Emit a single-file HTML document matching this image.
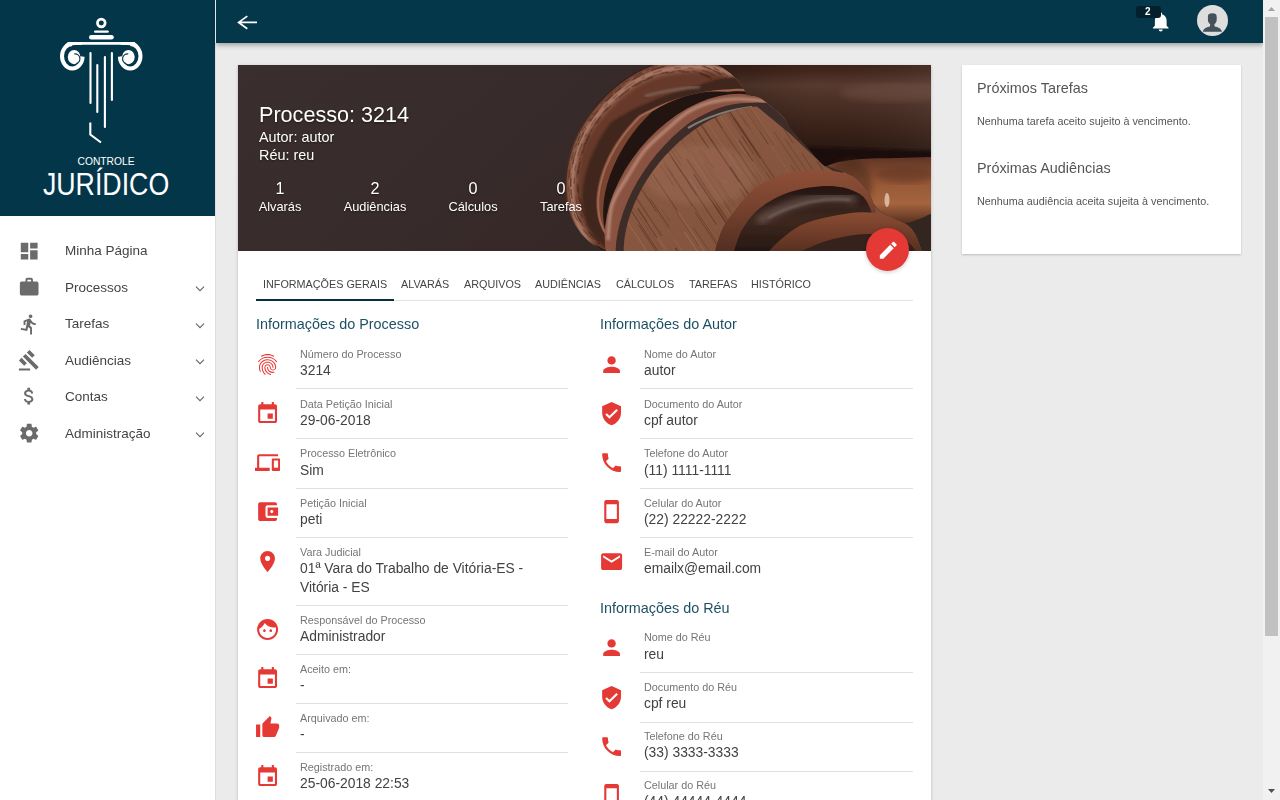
<!DOCTYPE html>
<html><head><meta charset="utf-8">
<style>
*{box-sizing:border-box;margin:0;padding:0}
html,body{width:1280px;height:800px;overflow:hidden}
body{font-family:"Liberation Sans",sans-serif;background:#ebebeb;position:relative;color:#333}
.abs{position:absolute}
.t{position:absolute;white-space:nowrap;line-height:1;will-change:transform}
#side{left:0;top:0;width:216px;height:800px;background:#fff;border-right:1px solid #dedede}
#sidetop{left:0;top:0;width:215px;height:216px;background:#04364a}
#hdr{left:216px;top:0;width:1047px;height:43px;background:#04374a;box-shadow:0 2px 5px rgba(0,0,0,.34)}
#vline{left:215px;top:0;width:1px;height:43px;background:#e6e6e6}
#card{left:238px;top:65px;width:693px;height:800px;background:#fff;box-shadow:0 1px 3px rgba(0,0,0,.22)}
#rpanel{left:962px;top:65px;width:279px;height:189px;background:#fff;box-shadow:0 1px 2px rgba(0,0,0,.2)}
#sb{left:1263px;top:0;width:17px;height:800px;background:#f1f1f1}
#thumb{left:1265px;top:17px;width:13px;height:619px;background:#c1c1c1}
.fab{left:866px;top:228px;width:43px;height:43px;border-radius:50%;background:#e53935;box-shadow:0 1px 4px rgba(0,0,0,.22)}
</style></head><body>
<div id="side" class="abs"></div>
<div id="sidetop" class="abs"></div>
<div id="hdr" class="abs"></div>
<div id="vline" class="abs"></div>

<svg class="abs" style="left:0;top:0" width="215" height="216" viewBox="0 0 215 216">
<g id="vol">
<path d="M72.3,43.9 A10.3,12.3 0 1 0 82.6,56.6" fill="none" stroke="#fff" stroke-width="4"/><path d="M68,42.05 L82,42.05 L82,44.75 L64,45.5 Z" fill="#fff"/>
<ellipse cx="74.1" cy="57.1" rx="6.3" ry="7.1" fill="#fff"/>
<path d="M80.5,56.5 L82.6,56.8 L80.5,62 Z" fill="#fff"/>
<path d="M74.2,54 A3.6,3.8 0 1 1 76.3,63.6" fill="none" stroke="#04364a" stroke-width="1.1"/>
</g>
<g fill="none" stroke="#fff" stroke-linecap="round">
<circle cx="101.3" cy="23" r="3.85" stroke-width="2.7"/>
<line x1="95.2" y1="31.6" x2="107.6" y2="31.6" stroke-width="2.4"/>
<line x1="91.3" y1="37.3" x2="111.5" y2="37.3" stroke-width="4.6"/>
<line x1="90.5" y1="53" x2="90.5" y2="103" stroke-width="2.1"/>
<line x1="97.3" y1="65" x2="97.3" y2="112" stroke-width="2.1"/>
<line x1="104.9" y1="57" x2="104.9" y2="127" stroke-width="2.1"/>
<line x1="111.9" y1="53" x2="111.9" y2="100" stroke-width="2.1"/>
<path d="M90.3 122.5 V134.5 L101 142.5" stroke-width="2.1" stroke-linecap="butt"/>
</g>
<rect x="72" y="42.05" width="58.5" height="2.7" fill="#fff"/>
<use href="#vol" transform="translate(202.5,0) scale(-1,1)"/>
<text x="77.5" y="165.2" font-family="Liberation Sans" font-size="10.9" fill="#fff" textLength="57" lengthAdjust="spacingAndGlyphs">CONTROLE</text>
<text x="42.9" y="194.8" font-family="Liberation Sans" font-size="31.2" fill="#fff" textLength="126.3" lengthAdjust="spacingAndGlyphs">JURÍDICO</text>
</svg>

<svg class="abs" style="left:17.6px;top:239.60000000000002px;width:22.4px;height:22.4px" viewBox="0 0 24 24"><path fill="#6b6b6b" d="M3 13h8V3H3v10zm0 8h8v-6H3v6zm10 0h8V11h-8v10zm0-18v6h8V3h-8z"/></svg>
<div class="t" style="left:65px;top:244.37px;font-size:13.5px;color:#444">Minha Página</div>
<svg class="abs" style="left:17.6px;top:276.05px;width:22.4px;height:22.4px" viewBox="0 0 24 24"><path fill="#6b6b6b" d="M20 6h-4V4c0-1.11-.89-2-2-2h-4c-1.11 0-2 .89-2 2v2H4c-1.11 0-1.99.89-1.99 2L2 19c0 1.11.89 2 2 2h16c1.11 0 2-.89 2-2V8c0-1.11-.89-2-2-2zm-6 0h-4V4h4v2z"/></svg>
<div class="t" style="left:65px;top:280.82px;font-size:13.5px;color:#444">Processos</div>
<svg class="abs" style="left:194px;top:285.25px" width="12" height="8" viewBox="0 0 12 8"><path d="M2,1.6 L6,5.7 L10,1.6" fill="none" stroke="#666" stroke-width="1.1"/></svg>
<svg class="abs" style="left:17.6px;top:312.50000000000006px;width:22.4px;height:22.4px" viewBox="0 0 24 24"><path fill="#6b6b6b" d="M13.49 5.48c1.1 0 2-.9 2-2s-.9-2-2-2-2 .9-2 2 .9 2 2 2zm-3.6 13.9l1-4.4 2.1 2v6h2v-7.5l-2.1-2 .6-3c1.3 1.5 3.3 2.5 5.5 2.5v-2c-1.9 0-3.5-1-4.3-2.4l-1-1.6c-.4-.6-1-1-1.7-1-.3 0-.5.1-.8.1l-5.2 2.2v4.7h2v-3.4l1.8-.7-1.6 8.1-4.9-1-.4 2 7 1.4z"/></svg>
<div class="t" style="left:65px;top:317.27px;font-size:13.5px;color:#444">Tarefas</div>
<svg class="abs" style="left:194px;top:321.70px" width="12" height="8" viewBox="0 0 12 8"><path d="M2,1.6 L6,5.7 L10,1.6" fill="none" stroke="#666" stroke-width="1.1"/></svg>
<svg class="abs" style="left:17.6px;top:348.95000000000005px;width:22.4px;height:22.4px" viewBox="0 0 24 24"><path fill="#6b6b6b" d="M1 21h12v2H1zM5.245 8.07l2.83-2.827 14.14 14.142-2.828 2.828zM12.317 1l5.657 5.656-2.83 2.83-5.654-5.66zM3.825 9.485l5.657 5.657-2.828 2.828-5.657-5.657z"/></svg>
<div class="t" style="left:65px;top:353.72px;font-size:13.5px;color:#444">Audiências</div>
<svg class="abs" style="left:194px;top:358.15px" width="12" height="8" viewBox="0 0 12 8"><path d="M2,1.6 L6,5.7 L10,1.6" fill="none" stroke="#666" stroke-width="1.1"/></svg>
<svg class="abs" style="left:17.6px;top:385.40000000000003px;width:22.4px;height:22.4px" viewBox="0 0 24 24"><path fill="#6b6b6b" d="M11.8 10.9c-2.27-.59-3-1.2-3-2.15 0-1.09 1.01-1.85 2.7-1.85 1.78 0 2.44.85 2.5 2.1h2.21c-.07-1.72-1.120-3.3-3.21-3.81V3h-3v2.16c-1.94.42-3.5 1.68-3.5 3.61 0 2.31 1.91 3.46 4.7 4.13 2.5.6 3 1.48 3 2.41 0 .69-.49 1.79-2.7 1.79-2.06 0-2.87-.92-2.98-2.1h-2.2c.12 2.19 1.76 3.42 3.68 3.830V21h3v-2.15c1.95-.37 3.5-1.5 3.5-3.55 0-2.84-2.43-3.81-4.7-4.4z"/></svg>
<div class="t" style="left:65px;top:390.17px;font-size:13.5px;color:#444">Contas</div>
<svg class="abs" style="left:194px;top:394.60px" width="12" height="8" viewBox="0 0 12 8"><path d="M2,1.6 L6,5.7 L10,1.6" fill="none" stroke="#666" stroke-width="1.1"/></svg>
<svg class="abs" style="left:17.6px;top:421.85px;width:22.4px;height:22.4px" viewBox="0 0 24 24"><path fill="#6b6b6b" d="M19.43 12.98c.04-.32.07-.64.07-.98s-.03-.66-.07-.98l2.11-1.65c.19-.15.24-.42.12-.64l-2-3.46c-.12-.22-.39-.3-.61-.22l-2.49 1c-.52-.4-1.08-.73-1.69-.98l-.38-2.65C14.46 2.18 14.25 2 14 2h-4c-.25 0-.46.18-.49.42l-.38 2.650c-.61.25-1.170.59-1.69.98l-2.49-1c-.23-.09-.49 0-.61.22l-2 3.46c-.13.22-.07.49.12.64l2.11 1.65c-.04.32-.07.65-.07.98s.03.66.07.98l-2.11 1.65c-.19.15-.24.42-.12.64l2 3.46c.12.22.39.3.61.22l2.49-1c.52.4 1.08.73 1.69.98l.38 2.65c.03.24.24.42.49.42h4c.25 0 .46-.18.49-.42l.38-2.65c.61-.25 1.17-.59 1.69-.98l2.49 1c.23.09.49 0 .61-.22l2-3.46c.12-.22.07-.49-.12-.64l-2.11-1.65zM12 15.5c-1.93 0-3.5-1.57-3.5-3.5s1.57-3.5 3.5-3.5 3.5 1.57 3.5 3.5-1.57 3.5-3.5 3.5z"/></svg>
<div class="t" style="left:65px;top:426.62px;font-size:13.5px;color:#444">Administração</div>
<svg class="abs" style="left:194px;top:431.05px" width="12" height="8" viewBox="0 0 12 8"><path d="M2,1.6 L6,5.7 L10,1.6" fill="none" stroke="#666" stroke-width="1.1"/></svg>
<svg class="abs" style="left:236px;top:14px" width="24" height="18" viewBox="0 0 24 18"><path d="M2.6 8.4 H21 M11.3 2.1 L2.6 8.4 L11.3 14.7" fill="none" stroke="#fff" stroke-width="1.7"/></svg>
<svg class="abs" style="left:1148.6px;top:9.8px;width:23.5px;height:23.5px" viewBox="0 0 24 24"><path fill="#fff" d="M12 22c1.1 0 2-.9 2-2h-4c0 1.1.89 2 2 2zm6-6v-5c0-3.07-1.64-5.64-4.5-6.32V4c0-.83-.67-1.5-1.5-1.5s-1.5.67-1.5 1.5v.68C7.63 5.36 6 7.92 6 11v5l-2 2v1h16v-1l-2-2z"/></svg>
<div class="abs" style="left:1136px;top:6px;width:25px;height:12px;border-radius:3px;background:#03202c"></div>
<div class="t" style="left:1145.2px;top:6.73px;font-size:10px;color:#fff;font-weight:bold">2</div>
<div class="abs" style="left:1197px;top:5px;width:31px;height:31px;border-radius:50%;background:#dedede;overflow:hidden"><svg width="31" height="31" viewBox="0 0 31 31"><path fill="#45525a" d="M10.9,11.8 C10.9,9.2 12.3,8.3 15.3,8.3 C18.3,8.3 19.7,9.2 19.7,11.8 L19.7,14.8 C19.7,17.6 17.7,19.8 15.3,19.8 C12.9,19.8 10.9,17.6 10.9,14.8 Z M13.2,18 L17.4,18 L17.6,21.6 C20.8,21.9 24.3,23.5 24.9,26.8 L5.9,26.8 C6.5,23.5 10,21.9 13,21.6 Z"/></svg></div>
<div id="sb" class="abs"></div><div id="thumb" class="abs"></div>
<svg class="abs" style="left:1263px;top:0" width="17" height="17"><path d="M5 11 L8.5 7 L12 11 Z" fill="#a3a3a3"/></svg>
<svg class="abs" style="left:1263px;top:783px" width="17" height="17"><path d="M5 6 L8.5 10 L12 6 Z" fill="#505050"/></svg>
<div id="card" class="abs"></div>
<svg class="abs" style="left:238px;top:65px" width="693" height="186" viewBox="238 65 693 186">
<defs>
<linearGradient id="bg" x1="0" y1="0" x2="1" y2="0.3">
<stop offset="0" stop-color="#3b2e2e"/><stop offset="0.5" stop-color="#372a2a"/><stop offset="1" stop-color="#33251f"/></linearGradient>
<linearGradient id="snd" x1="0" y1="0" x2="0" y2="1">
<stop offset="0" stop-color="#3a2019"/><stop offset="0.12" stop-color="#43271d"/><stop offset="0.26" stop-color="#583a2e"/><stop offset="0.38" stop-color="#4e3228"/><stop offset="0.7" stop-color="#3a2219"/><stop offset="0.92" stop-color="#2a1811"/><stop offset="1" stop-color="#1b0f0a"/></linearGradient>
<linearGradient id="sndh" x1="0" y1="0" x2="1" y2="0">
<stop offset="0" stop-color="#000" stop-opacity="0.3"/><stop offset="0.5" stop-color="#000" stop-opacity="0"/><stop offset="1" stop-color="#fff" stop-opacity="0.05"/></linearGradient>
<linearGradient id="hdl" x1="0" y1="0" x2="0" y2="1">
<stop offset="0" stop-color="#5e3424"/><stop offset="0.35" stop-color="#955736"/><stop offset="0.7" stop-color="#a4643f"/><stop offset="1" stop-color="#56301e"/></linearGradient>
<linearGradient id="body" x1="0" y1="0" x2="1" y2="1">
<stop offset="0" stop-color="#744532"/><stop offset="0.3" stop-color="#8c5a43"/><stop offset="0.65" stop-color="#80513b"/><stop offset="1" stop-color="#603826"/></linearGradient>
<linearGradient id="rC" x1="0" y1="0" x2="0" y2="1">
<stop offset="0" stop-color="#8e4f37"/><stop offset="0.35" stop-color="#7a4430"/><stop offset="1" stop-color="#4a2a1e"/></linearGradient>
<linearGradient id="rCd" x1="0" y1="0" x2="0" y2="1">
<stop offset="0" stop-color="#251510"/><stop offset="0.45" stop-color="#3e2820"/><stop offset="1" stop-color="#1e110c"/></linearGradient>
<linearGradient id="rD" x1="0" y1="0" x2="0" y2="1">
<stop offset="0" stop-color="#8c4c34"/><stop offset="1" stop-color="#4a281b"/></linearGradient>
<clipPath id="gclip"><path d="M630.6,257.2 L620.8,256.1 L611.4,253.9 L602.7,250.4 L594.6,245.8 L587.4,240.1 L581.1,233.4 L575.7,225.8 L571.4,217.3 L568.1,208.1 L566.0,198.3 L565.1,187.9 L565.3,177.2 L566.7,166.3 L569.2,155.2 L572.9,144.2 L577.6,133.4 L583.3,122.8 L590.0,112.7 L597.6,103.1 L605.9,94.2 L614.8,86.1 L624.4,78.9 L634.3,72.6 L644.6,67.4 L655.1,63.3 L665.7,60.4 L676.1,58.6 L686.4,58.1 L696.3,58.8 L705.8,60.7 L714.8,63.8 L723.0,68.1 L730.5,73.5 L737.1,79.9 L742.8,87.2 L747.4,95.5 L748.0,94.7 C748.7,94.9 750.0,95.5 752.0,96.0 C754.0,96.5 754.9,94.4 760.0,97.8 C765.1,101.2 777.3,111.0 782.6,116.5 C787.9,122.0 787.8,125.6 792.0,131.0 C796.2,136.4 802.8,143.3 808.0,149.0 C813.2,154.7 819.3,162.0 823.0,165.0 C826.7,168.0 825.0,165.1 830.0,167.0 C835.0,168.9 846.8,172.7 853.0,176.6 C859.2,180.5 863.3,185.7 867.0,190.6 C870.7,195.5 871.7,201.8 875.0,206.0 C878.3,210.2 881.0,211.9 887.0,215.6 C893.0,219.3 904.9,222.1 910.7,228.0 C916.5,233.9 919.4,245.3 921.6,251.0 C923.8,256.7 923.6,260.2 924.0,262.0 L600,262 Z"/></clipPath>
<clipPath id="bclip"><path d="M668.7,312.8 L662.2,311.2 L656.0,308.8 L650.3,305.9 L645.0,302.2 L640.3,298.0 L636.1,293.1 L632.5,287.7 L629.4,281.8 L627.0,275.3 L625.2,268.5 L624.1,261.2 L623.6,253.6 L623.8,245.7 L624.6,237.5 L626.1,229.2 L628.2,220.7 L631.0,212.2 L634.3,203.7 L638.3,195.2 L642.7,186.8 L647.8,178.5 L653.3,170.5 L659.2,162.7 L665.6,155.3 L672.4,148.2 L679.4,141.6 L686.8,135.4 L694.4,129.8 L702.1,124.6 L710.0,120.1 L718.0,116.2 L725.9,112.9 L733.8,110.3 L741.7,108.3 L749.4,107.0 L756.9,106.5 L790.0,133.8 L823.0,165.0 L840.0,175.0 L1000,40 L1000,262 L560,262 Z"/></clipPath>
<filter id="blur05"><feGaussianBlur stdDeviation="0.6"/></filter>
<filter id="blur1"><feGaussianBlur stdDeviation="1.2"/></filter>
<filter id="blur2"><feGaussianBlur stdDeviation="2"/></filter>
<filter id="blur3"><feGaussianBlur stdDeviation="3"/></filter>
</defs>
<rect x="238" y="65" width="693" height="186" fill="url(#bg)"/>
<path d="M690,60 L935,60 L935,157 C900,157 860,153 830,150 C800,147 770,130 740,110 Z" fill="url(#snd)"/>
<path d="M690,60 L935,60 L935,157 C900,157 860,153 830,150 C800,147 770,130 740,110 Z" fill="url(#sndh)"/>
<ellipse cx="895" cy="93" rx="55" ry="9" fill="#7a5648" opacity="0.4" filter="url(#blur3)"/>
<path d="M790,146 L935,151 L935,166 L820,176 Z" fill="#1c100b" filter="url(#blur1)"/>
<path d="M815.0,180.0 C817.2,177.6 821.2,169.0 828.0,165.6 C834.8,162.2 844.0,160.7 856.0,159.4 C868.0,158.1 886.8,158.4 900.0,158.0 C913.2,157.6 929.2,157.2 935.0,157.0 L935,212 L935.0,212.0 C929.7,213.9 912.8,223.3 903.0,223.4 C893.2,223.5 884.8,216.4 876.0,212.5 C867.2,208.6 860.2,205.4 850.0,200.0 C839.8,194.6 820.8,183.3 815.0,180.0 Z" fill="url(#hdl)"/>
<ellipse cx="850" cy="185" rx="22" ry="26" fill="#3a2016" opacity="0.45" filter="url(#blur3)"/><ellipse cx="905" cy="175" rx="30" ry="8" fill="#5a3020" opacity="0.5" filter="url(#blur3)"/><ellipse cx="887" cy="200" rx="2.5" ry="7" fill="#f0d8c8" opacity="0.7" filter="url(#blur05)"/>
<g clip-path="url(#gclip)">
<rect x="550" y="50" width="400" height="220" fill="#66392a"/>
<path d="M630.6,257.2 C629.0,257.0 624.0,256.7 620.8,256.1 C617.6,255.6 614.4,254.8 611.4,253.9 C608.4,252.9 605.5,251.7 602.7,250.4 C599.9,249.0 597.2,247.5 594.6,245.8 C592.1,244.1 589.7,242.2 587.4,240.1 C585.2,238.0 583.0,235.8 581.1,233.4 C579.1,231.0 577.3,228.5 575.7,225.8 C574.1,223.1 572.6,220.2 571.4,217.3 C570.1,214.3 569.0,211.3 568.1,208.1 C567.3,204.9 566.5,201.6 566.0,198.3 C565.5,194.9 565.2,191.4 565.1,187.9 C565.0,184.4 565.0,180.8 565.3,177.2 C565.6,173.6 566.0,170.0 566.7,166.3 C567.3,162.6 568.2,158.9 569.2,155.2 C570.2,151.6 571.5,147.9 572.9,144.2 C574.3,140.6 575.8,136.9 577.6,133.4 C579.3,129.8 581.3,126.3 583.3,122.8 C585.4,119.4 587.6,116.0 590.0,112.7 C592.4,109.4 594.9,106.2 597.6,103.1 C600.2,100.1 603.0,97.1 605.9,94.2 C608.7,91.4 611.8,88.7 614.8,86.1 C617.9,83.6 621.1,81.1 624.4,78.9 C627.6,76.6 631.0,74.5 634.3,72.6 C637.7,70.7 641.2,69.0 644.6,67.4 C648.1,65.9 651.6,64.5 655.1,63.3 C658.6,62.1 662.1,61.1 665.7,60.4 C669.2,59.6 672.7,59.0 676.1,58.6 C679.6,58.2 683.0,58.1 686.4,58.1 C689.8,58.1 693.1,58.4 696.3,58.8 C699.6,59.2 702.8,59.9 705.8,60.7 C708.9,61.5 711.9,62.6 714.8,63.8 C717.6,65.1 720.4,66.5 723.0,68.1 C725.6,69.7 728.1,71.5 730.5,73.5 C732.8,75.4 735.1,77.6 737.1,79.9 C739.2,82.2 741.1,84.6 742.8,87.2 C744.5,89.8 746.6,94.1 747.4,95.5" fill="none" stroke="#2a1a14" stroke-width="3" filter="url(#blur05)"/>
<path d="M592.0,248.0 C589.5,243.7 580.3,230.8 577.0,222.0 C573.7,213.2 572.5,204.5 572.0,195.0 C571.5,185.5 572.5,174.2 574.0,165.0 C575.5,155.8 577.3,148.0 581.0,140.0 C584.7,132.0 590.3,124.2 596.0,117.0 C601.7,109.8 608.0,103.2 615.0,97.0 C622.0,90.8 629.7,84.5 638.0,80.0 C646.3,75.5 654.7,72.2 665.0,70.0 C675.3,67.8 689.5,66.7 700.0,67.0 C710.5,67.3 720.7,68.5 728.0,72.0 C735.3,75.5 741.3,85.3 744.0,88.0" fill="none" stroke="#a06a55" stroke-width="9" stroke-opacity="0.85" filter="url(#blur2)"/>
<path d="M592.0,248.0 C589.5,243.7 580.3,230.8 577.0,222.0 C573.7,213.2 572.5,204.5 572.0,195.0 C571.5,185.5 572.5,174.2 574.0,165.0 C575.5,155.8 577.3,148.0 581.0,140.0 C584.7,132.0 590.3,124.2 596.0,117.0 C601.7,109.8 608.0,103.2 615.0,97.0 C622.0,90.8 629.7,84.5 638.0,80.0 C646.3,75.5 654.7,72.2 665.0,70.0 C675.3,67.8 689.5,66.7 700.0,67.0 C710.5,67.3 720.7,68.5 728.0,72.0 C735.3,75.5 741.3,85.3 744.0,88.0" fill="none" stroke="#c8a090" stroke-width="2.5" stroke-opacity="0.5" filter="url(#blur1)"/>
<g filter="url(#blur05)"><path d="M618.0,249.2 L610.6,246.9 L603.7,243.7 L597.3,239.8 L591.5,235.1 L586.3,229.6 L581.8,223.6 L578.0,216.9 L575.0,209.6 L572.7,201.9 L571.3,193.8 L570.7,185.3 L570.9,176.6 L571.9,167.7 L573.7,158.8 L576.3,149.8 L579.7,140.9 L583.8,132.1 L588.7,123.6 L594.1,115.4 L600.2,107.5 L606.9,100.2 L614.0,93.4 L621.6,87.1 L629.5,81.5 L637.7,76.6 L646.1,72.5 L654.6,69.2 L663.2,66.6 L671.7,64.9 L680.1,64.1 L688.4,64.1 L696.4,65.0 L704.0,66.7 L711.3,69.3 L718.1,72.6 L724.3,76.8 L729.9,81.7 L735.0,87.3 L739.3,93.6 L742.9,100.4" fill="none" stroke="#2a160e" stroke-width="1.3" stroke-opacity="0.41" stroke-dasharray="13 7 14 13 13 12 10 2 9 14"/><path d="M620.9,242.8 L614.1,240.6 L607.7,237.7 L601.7,234.0 L596.3,229.6 L591.5,224.6 L587.3,218.9 L583.8,212.7 L581.0,206.0 L578.9,198.8 L577.5,191.2 L576.9,183.4 L577.1,175.3 L578.1,167.0 L579.8,158.7 L582.2,150.3 L585.3,142.0 L589.2,133.9 L593.7,126.0 L598.8,118.3 L604.4,111.1 L610.6,104.2 L617.2,97.9 L624.3,92.1 L631.6,86.9 L639.2,82.4 L647.0,78.5 L655.0,75.4 L662.9,73.0 L670.9,71.4 L678.7,70.7 L686.4,70.7 L693.8,71.5 L700.9,73.1 L707.7,75.5 L714.0,78.6 L719.8,82.5 L725.0,87.1 L729.7,92.3 L733.7,98.1 L737.0,104.5" fill="none" stroke="#3a2014" stroke-width="1.3" stroke-opacity="0.32" stroke-dasharray="9 5 8 10 3 11 5 2 13 5"/><path d="M617.2,251.0 L609.7,248.7 L602.6,245.4 L596.1,241.4 L590.2,236.6 L584.9,231.1 L580.3,224.9 L576.4,218.0 L573.3,210.6 L571.0,202.8 L569.5,194.5 L568.9,185.9 L569.1,177.0 L570.1,167.9 L572.0,158.8 L574.7,149.6 L578.1,140.5 L582.3,131.6 L587.2,122.9 L592.8,114.5 L599.1,106.6 L605.8,99.1 L613.1,92.1 L620.8,85.7 L628.9,80.0 L637.2,75.1 L645.8,70.8 L654.5,67.4 L663.2,64.8 L671.9,63.1 L680.5,62.2 L688.9,62.2 L697.1,63.1 L704.9,64.9 L712.3,67.5 L719.2,71.0 L725.6,75.2 L731.3,80.2 L736.4,85.9 L740.8,92.3 L744.5,99.3" fill="none" stroke="#2a160e" stroke-width="0.6" stroke-opacity="0.49" stroke-dasharray="4 14 14 3 4 11 11 9 4 4"/><path d="M617.1,251.1 L609.6,248.7 L602.5,245.5 L596.0,241.5 L590.1,236.7 L584.8,231.1 L580.2,224.9 L576.3,218.1 L573.2,210.7 L570.9,202.8 L569.4,194.5 L568.8,185.9 L569.0,177.0 L570.0,167.9 L571.9,158.8 L574.6,149.6 L578.0,140.5 L582.2,131.6 L587.2,122.9 L592.8,114.5 L599.0,106.5 L605.8,99.0 L613.0,92.0 L620.8,85.7 L628.8,79.9 L637.2,75.0 L645.8,70.7 L654.5,67.3 L663.2,64.7 L671.9,63.0 L680.6,62.1 L689.0,62.1 L697.1,63.0 L704.9,64.8 L712.3,67.4 L719.3,70.9 L725.6,75.1 L731.4,80.1 L736.5,85.9 L740.9,92.2 L744.6,99.2" fill="none" stroke="#b08068" stroke-width="1.4" stroke-opacity="0.18" stroke-dasharray="4 4 6 7 5 10 12 12 5 4"/><path d="M619.4,246.2 L612.3,243.9 L605.6,240.9 L599.4,237.1 L593.8,232.5 L588.8,227.3 L584.4,221.4 L580.7,214.9 L577.8,207.9 L575.6,200.4 L574.2,192.6 L573.6,184.4 L573.8,176.0 L574.8,167.4 L576.5,158.7 L579.1,150.0 L582.4,141.4 L586.3,132.9 L591.0,124.7 L596.3,116.8 L602.2,109.2 L608.6,102.1 L615.5,95.5 L622.8,89.5 L630.5,84.1 L638.4,79.3 L646.5,75.3 L654.8,72.1 L663.0,69.6 L671.3,68.0 L679.5,67.2 L687.4,67.2 L695.2,68.0 L702.6,69.7 L709.6,72.2 L716.1,75.5 L722.2,79.5 L727.6,84.2 L732.5,89.7 L736.6,95.7 L740.1,102.3" fill="none" stroke="#b08068" stroke-width="1.1" stroke-opacity="0.15" stroke-dasharray="2 7 8 4 4 6 3 7 6 11"/><path d="M619.6,245.6 L612.6,243.4 L605.9,240.3 L599.8,236.5 L594.2,232.0 L589.2,226.8 L584.9,221.0 L581.2,214.5 L578.3,207.6 L576.2,200.2 L574.8,192.4 L574.2,184.2 L574.4,175.9 L575.3,167.3 L577.1,158.7 L579.6,150.1 L582.9,141.5 L586.8,133.1 L591.5,124.9 L596.7,117.0 L602.6,109.5 L609.0,102.5 L615.8,95.9 L623.1,89.9 L630.7,84.5 L638.5,79.8 L646.6,75.9 L654.8,72.6 L663.0,70.2 L671.2,68.6 L679.3,67.8 L687.3,67.8 L694.9,68.6 L702.3,70.3 L709.3,72.7 L715.8,76.0 L721.8,80.0 L727.2,84.7 L732.0,90.1 L736.1,96.1 L739.6,102.7" fill="none" stroke="#2a160e" stroke-width="1.4" stroke-opacity="0.26" stroke-dasharray="6 7 6 9 13 7 4 9 9 13"/><path d="M621.5,241.6 L614.7,239.5 L608.4,236.6 L602.5,233.0 L597.2,228.6 L592.4,223.7 L588.3,218.1 L584.8,212.0 L582.0,205.3 L580.0,198.2 L578.6,190.8 L578.1,183.0 L578.2,175.0 L579.2,166.9 L580.8,158.7 L583.2,150.4 L586.4,142.2 L590.1,134.2 L594.6,126.4 L599.6,118.9 L605.2,111.7 L611.3,105.0 L617.8,98.7 L624.7,93.0 L632.0,87.8 L639.5,83.4 L647.2,79.6 L655.0,76.5 L662.9,74.2 L670.7,72.6 L678.5,71.8 L686.0,71.8 L693.4,72.6 L700.4,74.2 L707.0,76.6 L713.2,79.7 L719.0,83.5 L724.1,88.0 L728.7,93.2 L732.7,98.9 L736.0,105.2" fill="none" stroke="#2a160e" stroke-width="1.2" stroke-opacity="0.36" stroke-dasharray="13 7 8 2 10 14 8 7 8 11"/><path d="M618.0,249.2 L610.6,246.9 L603.7,243.7 L597.3,239.8 L591.5,235.1 L586.3,229.6 L581.8,223.6 L578.0,216.9 L575.0,209.6 L572.7,201.9 L571.3,193.8 L570.6,185.3 L570.8,176.6 L571.9,167.7 L573.7,158.8 L576.3,149.8 L579.7,140.9 L583.8,132.1 L588.6,123.6 L594.1,115.4 L600.2,107.5 L606.9,100.2 L614.0,93.4 L621.6,87.1 L629.5,81.5 L637.7,76.6 L646.1,72.5 L654.6,69.1 L663.2,66.6 L671.7,64.9 L680.1,64.1 L688.4,64.1 L696.4,64.9 L704.0,66.7 L711.3,69.2 L718.1,72.6 L724.3,76.8 L730.0,81.7 L735.0,87.3 L739.3,93.6 L742.9,100.4" fill="none" stroke="#3a2014" stroke-width="1.2" stroke-opacity="0.28" stroke-dasharray="5 3 14 5 9 7 10 7 10 6"/><path d="M617.0,251.4 L609.4,249.0 L602.4,245.8 L595.8,241.7 L589.9,236.9 L584.5,231.4 L579.9,225.1 L576.0,218.3 L572.9,210.9 L570.6,203.0 L569.2,194.7 L568.5,186.0 L568.7,177.1 L569.7,168.0 L571.6,158.8 L574.3,149.6 L577.8,140.4 L582.0,131.5 L586.9,122.8 L592.6,114.3 L598.8,106.3 L605.6,98.8 L612.9,91.8 L620.6,85.4 L628.7,79.7 L637.1,74.7 L645.7,70.5 L654.4,67.0 L663.2,64.4 L672.0,62.7 L680.6,61.8 L689.1,61.8 L697.2,62.7 L705.1,64.5 L712.5,67.1 L719.5,70.6 L725.8,74.9 L731.6,79.9 L736.8,85.6 L741.2,92.0 L744.8,99.1" fill="none" stroke="#3a2014" stroke-width="1.2" stroke-opacity="0.32" stroke-dasharray="6 2 8 3 5 7 10 11 7 4"/><path d="M621.1,242.5 L614.2,240.3 L607.8,237.4 L601.9,233.8 L596.5,229.4 L591.7,224.4 L587.5,218.7 L584.0,212.5 L581.2,205.8 L579.1,198.7 L577.8,191.1 L577.2,183.3 L577.4,175.2 L578.3,167.0 L580.0,158.7 L582.4,150.3 L585.6,142.1 L589.4,134.0 L593.9,126.1 L599.0,118.5 L604.6,111.2 L610.8,104.4 L617.4,98.1 L624.4,92.3 L631.7,87.1 L639.3,82.6 L647.1,78.8 L655.0,75.6 L662.9,73.3 L670.8,71.7 L678.7,70.9 L686.3,70.9 L693.7,71.8 L700.8,73.4 L707.5,75.7 L713.8,78.9 L719.6,82.7 L724.8,87.3 L729.5,92.5 L733.5,98.3 L736.8,104.6" fill="none" stroke="#3a2014" stroke-width="0.7" stroke-opacity="0.50" stroke-dasharray="12 7 6 4 14 3 12 4 13 13"/></g>
<path d="M623.4,253.5 L617.1,251.9 L611.2,249.7 L605.8,246.7 L600.8,243.1 L596.4,238.8 L592.6,234.0 L589.3,228.6 L586.6,222.7 L584.6,216.3 L583.3,209.5 L582.5,202.3 L582.5,194.8 L583.1,187.0 L584.4,179.0 L586.4,170.9 L589.0,162.7 L592.2,154.5 L596.0,146.3 L600.3,138.2 L605.2,130.4 L610.6,122.7 L619.6,117.1 L629.1,111.8 L639.1,106.7 L649.5,101.9 L660.4,97.6 L671.7,93.6 L683.2,90.2 L695.0,87.4 L703.3,83.8 L711.6,80.9 L719.8,78.8 L727.8,77.4 L735.6,76.8 L743.1,77.0 L750.3,77.9 L757.1,79.6 L763.5,82.1 L769.4,85.3 L774.8,89.2 L779.5,93.8 L783.7,99.1 L787.3,104.9 L790.1,111.3 L792.3,118.3 L793.8,125.6 L1000,40 L1000,262 L560,262 Z" fill="#40261c" filter="url(#blur1)"/>
<path d="M645,96 C660,92 680,88 700,87" fill="none" stroke="#8a8078" stroke-width="2.5" stroke-opacity="0.6" filter="url(#blur1)"/>
<path d="M633.3,252.8 L627.6,251.4 L622.2,249.3 L617.3,246.6 L612.8,243.4 L608.8,239.5 L605.3,235.1 L602.4,230.3 L600.0,224.9 L598.1,219.1 L596.9,212.9 L596.3,206.4 L596.2,199.6 L596.8,192.6 L598.0,185.4 L599.8,178.0 L602.1,170.6 L605.0,163.2 L608.4,155.8 L612.4,148.5 L616.8,141.3 L621.7,134.4 L627.0,127.7 L632.6,121.3 L638.6,115.3 L646.9,110.9 L655.7,106.7 L664.9,102.8 L674.6,99.3 L684.7,96.2 L695.1,93.6 L705.8,91.5 L716.7,90.1 L727.8,89.4 L735.6,88.8 L743.1,89.0 L750.3,89.9 L757.1,91.6 L763.5,94.1 L769.4,97.3 L774.8,101.2 L779.5,105.8 L783.7,111.1 L787.3,116.9 L790.1,123.3 L792.3,130.3 L793.8,137.6 L1000,40 L1000,262 L560,262 Z" fill="#7a4432"/>
<path d="M633.3,252.8 C632.3,252.6 629.4,252.0 627.6,251.4 C625.7,250.8 623.9,250.1 622.2,249.3 C620.5,248.5 618.9,247.6 617.3,246.6 C615.7,245.6 614.2,244.6 612.8,243.4 C611.4,242.2 610.1,240.9 608.8,239.5 C607.6,238.2 606.4,236.7 605.3,235.1 C604.3,233.6 603.3,232.0 602.4,230.3 C601.5,228.5 600.7,226.7 600.0,224.9 C599.3,223.0 598.7,221.1 598.1,219.1 C597.6,217.1 597.2,215.0 596.9,212.9 C596.6,210.8 596.4,208.6 596.3,206.4 C596.2,204.2 596.2,201.9 596.2,199.6 C596.3,197.3 596.5,195.0 596.8,192.6 C597.1,190.2 597.5,187.8 598.0,185.4 C598.5,182.9 599.1,180.5 599.8,178.0 C600.4,175.5 601.2,173.1 602.1,170.6 C603.0,168.1 603.9,165.6 605.0,163.2 C606.0,160.7 607.2,158.2 608.4,155.8 C609.7,153.3 611.0,150.9 612.4,148.5 C613.8,146.0 615.3,143.7 616.8,141.3 C618.4,139.0 620.0,136.6 621.7,134.4 C623.4,132.1 625.1,129.9 627.0,127.7 C628.8,125.5 630.7,123.4 632.6,121.3 C634.6,119.3 636.2,117.1 638.6,115.3 C641.0,113.6 644.0,112.3 646.9,110.9 C649.7,109.5 652.7,108.1 655.7,106.7 C658.7,105.4 661.8,104.1 664.9,102.8 C668.1,101.6 671.3,100.4 674.6,99.3 C677.9,98.2 681.3,97.1 684.7,96.2 C688.1,95.2 691.6,94.3 695.1,93.6 C698.6,92.8 702.2,92.1 705.8,91.5 C709.4,91.0 713.1,90.5 716.7,90.1 C720.4,89.8 724.6,89.6 727.8,89.4 C730.9,89.2 733.0,88.9 735.6,88.8 C738.1,88.7 740.7,88.8 743.1,89.0 C745.6,89.2 748.0,89.5 750.3,89.9 C752.7,90.4 754.9,90.9 757.1,91.6 C759.3,92.3 761.5,93.2 763.5,94.1 C765.6,95.1 767.5,96.1 769.4,97.3 C771.3,98.5 773.1,99.8 774.8,101.2 C776.4,102.6 778.1,104.2 779.5,105.8 C781.0,107.5 782.4,109.2 783.7,111.1 C785.0,112.9 786.2,114.9 787.3,116.9 C788.3,119.0 789.3,121.1 790.1,123.3 C791.0,125.6 791.7,127.9 792.3,130.3 C792.9,132.6 793.6,136.4 793.8,137.6" fill="none" stroke="#b08068" stroke-width="2" stroke-opacity="0.6" filter="url(#blur05)" transform="translate(2,1)"/>
<path d="M646.0,270.7 L639.4,269.0 L633.2,266.6 L627.5,263.5 L622.4,259.7 L617.7,255.3 L613.7,250.2 L610.3,244.6 L607.5,238.4 L605.4,231.7 L603.9,224.5 L603.2,217.0 L603.2,209.1 L603.8,200.9 L605.2,192.6 L607.2,184.1 L609.9,175.5 L613.3,166.9 L617.3,158.3 L621.8,149.9 L627.0,141.6 L632.6,133.6 L638.7,125.8 L645.3,118.5 L652.2,111.5 L659.8,107.0 L667.8,103.0 L676.0,99.5 L684.5,96.6 L693.1,94.3 L701.8,92.6 L710.5,91.6 L719.2,91.4 L727.8,91.9 L735.6,91.3 L743.1,91.5 L750.3,92.4 L757.1,94.1 L763.5,96.6 L769.4,99.8 L774.8,103.7 L779.5,108.3 L783.7,113.6 L787.3,119.4 L790.1,125.8 L792.3,132.8 L793.8,140.1 L1000,40 L1000,262 L560,262 Z" fill="#221410"/>
<path d="M648.9,296.6 L640.3,294.3 L632.4,290.7 L625.4,286.0 L619.2,280.1 L614.1,273.2 L610.0,265.4 L607.0,256.7 L605.2,247.2 L604.6,237.1 L605.1,226.4 L606.9,215.4 L609.7,204.2 L613.7,192.8 L618.8,181.5 L624.8,170.3 L631.8,159.5 L639.6,149.1 L648.2,139.3 L657.4,130.2 L667.1,121.9 L677.3,114.5 L687.7,108.2 L698.3,102.9 L708.8,98.8 L719.3,95.9 L729.5,94.2 L739.4,93.8 L748.8,94.6 L757.5,96.8 L765.5,100.1 L772.7,104.6 L779.0,110.3 L784.4,117.0 L788.6,124.7 L791.8,133.3 L793.8,142.6 L1000,40 L1000,262 L560,262 Z" fill="#8a5240"/>
<path d="M608.0,240.0 C608.7,234.2 608.7,215.7 612.0,205.0 C615.3,194.3 622.5,185.2 628.0,176.0 C633.5,166.8 638.8,157.5 645.0,150.0 C651.2,142.5 657.8,137.3 665.0,131.0 C672.2,124.7 680.2,116.8 688.0,112.0 C695.8,107.2 703.3,104.2 712.0,102.0 C720.7,99.8 730.7,98.8 740.0,99.0 C749.3,99.2 760.3,99.5 768.0,103.0 C775.7,106.5 783.0,117.2 786.0,120.0" fill="none" stroke="#c49886" stroke-width="3.5" stroke-opacity="0.7" filter="url(#blur1)"/>
<path d="M665.6,322.6 L657.9,320.6 L650.7,317.9 L644.0,314.2 L638.0,309.8 L632.6,304.6 L627.9,298.7 L623.9,292.1 L620.6,284.8 L618.1,277.0 L616.5,268.7 L615.6,259.9 L615.6,250.7 L616.3,241.2 L617.9,231.4 L620.3,221.5 L623.5,211.4 L627.4,201.4 L632.0,191.4 L637.4,181.5 L643.4,171.9 L650.0,162.5 L657.1,153.5 L664.8,144.9 L672.8,136.7 L681.3,129.2 L690.1,122.2 L699.1,116.9 L708.0,112.4 L716.8,108.8 L725.3,106.1 L733.6,104.2 L741.5,103.2 L748.9,103.1 L756.9,102.5 L764.5,102.7 L771.8,103.6 L778.8,105.4 L785.3,107.9 L791.3,111.1 L796.7,115.1 L801.6,119.8 L805.8,125.1 L809.4,131.1 L812.3,137.6 L814.6,144.7 L816.1,152.2 L1000,40 L1000,262 L560,262 Z" fill="#3d2c27"/>
<path d="M688,128 C705,118 725,110 752,107" fill="none" stroke="#9a948e" stroke-width="2.2" stroke-opacity="0.75" filter="url(#blur05)"/>
<path d="M668.7,312.8 L662.2,311.2 L656.0,308.8 L650.3,305.9 L645.0,302.2 L640.3,298.0 L636.1,293.1 L632.5,287.7 L629.4,281.8 L627.0,275.3 L625.2,268.5 L624.1,261.2 L623.6,253.6 L623.8,245.7 L624.6,237.5 L626.1,229.2 L628.2,220.7 L631.0,212.2 L634.3,203.7 L638.3,195.2 L642.7,186.8 L647.8,178.5 L653.3,170.5 L659.2,162.7 L665.6,155.3 L672.4,148.2 L679.4,141.6 L686.8,135.4 L694.4,129.8 L702.1,124.6 L710.0,120.1 L718.0,116.2 L725.9,112.9 L733.8,110.3 L741.7,108.3 L749.4,107.0 L756.9,106.5 L790.0,133.8 L823.0,165.0 L840.0,175.0 L1000,40 L1000,262 L560,262 Z" fill="url(#body)"/>
<g clip-path="url(#bclip)"><line x1="689.7" y1="154.5" x2="736.5" y2="224.6" stroke="#c49a80" stroke-opacity="0.16" stroke-width="0.91"/><line x1="633.4" y1="207.5" x2="661.5" y2="249.7" stroke="#5a3422" stroke-opacity="0.43" stroke-width="0.59"/><line x1="654.8" y1="83.0" x2="696.9" y2="146.0" stroke="#5a3422" stroke-opacity="0.46" stroke-width="0.44"/><line x1="824.2" y1="179.2" x2="858.2" y2="230.1" stroke="#c49a80" stroke-opacity="0.10" stroke-width="0.42"/><line x1="593.3" y1="72.0" x2="638.2" y2="139.4" stroke="#4a2a1a" stroke-opacity="0.42" stroke-width="1.18"/><line x1="695.2" y1="212.4" x2="725.1" y2="257.2" stroke="#3a1e12" stroke-opacity="0.44" stroke-width="0.90"/><line x1="689.4" y1="107.1" x2="739.2" y2="181.9" stroke="#4a2a1a" stroke-opacity="0.60" stroke-width="1.24"/><line x1="668.6" y1="121.5" x2="689.0" y2="152.0" stroke="#5a3422" stroke-opacity="0.18" stroke-width="1.17"/><line x1="621.4" y1="138.2" x2="632.5" y2="154.9" stroke="#3a1e12" stroke-opacity="0.16" stroke-width="1.08"/><line x1="638.5" y1="224.7" x2="666.4" y2="266.5" stroke="#3a1e12" stroke-opacity="0.59" stroke-width="0.80"/><line x1="723.4" y1="104.5" x2="759.8" y2="159.1" stroke="#3a1e12" stroke-opacity="0.30" stroke-width="0.71"/><line x1="834.4" y1="211.4" x2="847.6" y2="231.2" stroke="#3a1e12" stroke-opacity="0.26" stroke-width="0.50"/><line x1="697.9" y1="150.4" x2="734.6" y2="205.4" stroke="#3a1e12" stroke-opacity="0.23" stroke-width="0.91"/><line x1="692.4" y1="142.8" x2="717.2" y2="180.0" stroke="#c49a80" stroke-opacity="0.27" stroke-width="0.40"/><line x1="667.5" y1="228.8" x2="684.6" y2="254.4" stroke="#c49a80" stroke-opacity="0.15" stroke-width="1.25"/><line x1="616.5" y1="245.4" x2="633.7" y2="271.2" stroke="#4a2a1a" stroke-opacity="0.27" stroke-width="1.17"/><line x1="801.9" y1="153.2" x2="813.3" y2="170.3" stroke="#3a1e12" stroke-opacity="0.24" stroke-width="1.04"/><line x1="736.7" y1="139.1" x2="763.9" y2="179.9" stroke="#c49a80" stroke-opacity="0.26" stroke-width="0.88"/><line x1="616.7" y1="136.0" x2="651.1" y2="187.6" stroke="#c49a80" stroke-opacity="0.13" stroke-width="0.63"/><line x1="642.8" y1="101.1" x2="681.9" y2="159.7" stroke="#5a3422" stroke-opacity="0.57" stroke-width="0.60"/><line x1="807.6" y1="177.2" x2="833.5" y2="216.0" stroke="#4a2a1a" stroke-opacity="0.20" stroke-width="0.44"/><line x1="650.1" y1="198.5" x2="669.1" y2="227.0" stroke="#4a2a1a" stroke-opacity="0.52" stroke-width="1.00"/><line x1="705.5" y1="211.9" x2="754.5" y2="285.4" stroke="#c49a80" stroke-opacity="0.09" stroke-width="0.88"/><line x1="730.3" y1="110.0" x2="776.8" y2="179.7" stroke="#4a2a1a" stroke-opacity="0.24" stroke-width="0.42"/><line x1="697.7" y1="132.2" x2="708.0" y2="147.5" stroke="#3a1e12" stroke-opacity="0.28" stroke-width="0.93"/><line x1="609.5" y1="101.9" x2="636.6" y2="142.4" stroke="#c49a80" stroke-opacity="0.13" stroke-width="1.13"/><line x1="741.2" y1="115.1" x2="751.0" y2="129.8" stroke="#4a2a1a" stroke-opacity="0.16" stroke-width="1.31"/><line x1="823.3" y1="77.3" x2="858.1" y2="129.5" stroke="#4a2a1a" stroke-opacity="0.37" stroke-width="1.13"/><line x1="620.6" y1="91.2" x2="647.7" y2="132.0" stroke="#3a1e12" stroke-opacity="0.32" stroke-width="0.44"/><line x1="786.8" y1="229.2" x2="809.8" y2="263.6" stroke="#5a3422" stroke-opacity="0.46" stroke-width="1.30"/><line x1="821.5" y1="83.0" x2="850.6" y2="126.7" stroke="#5a3422" stroke-opacity="0.16" stroke-width="1.06"/><line x1="739.8" y1="188.7" x2="751.5" y2="206.2" stroke="#5a3422" stroke-opacity="0.44" stroke-width="1.39"/><line x1="762.6" y1="133.0" x2="801.5" y2="191.3" stroke="#c49a80" stroke-opacity="0.19" stroke-width="0.84"/><line x1="616.2" y1="212.9" x2="625.7" y2="227.2" stroke="#3a1e12" stroke-opacity="0.42" stroke-width="0.88"/><line x1="819.0" y1="87.5" x2="859.7" y2="148.6" stroke="#3a1e12" stroke-opacity="0.45" stroke-width="0.89"/><line x1="675.1" y1="97.6" x2="708.9" y2="148.2" stroke="#4a2a1a" stroke-opacity="0.38" stroke-width="1.15"/><line x1="742.3" y1="136.6" x2="787.7" y2="204.8" stroke="#3a1e12" stroke-opacity="0.30" stroke-width="1.07"/><line x1="738.7" y1="198.8" x2="778.4" y2="258.4" stroke="#3a1e12" stroke-opacity="0.24" stroke-width="0.61"/><line x1="738.8" y1="140.1" x2="752.8" y2="161.1" stroke="#3a1e12" stroke-opacity="0.37" stroke-width="1.24"/><line x1="767.9" y1="237.1" x2="787.7" y2="266.9" stroke="#4a2a1a" stroke-opacity="0.23" stroke-width="0.85"/><line x1="819.3" y1="214.8" x2="843.6" y2="251.1" stroke="#c49a80" stroke-opacity="0.17" stroke-width="1.07"/><line x1="708.3" y1="104.7" x2="717.9" y2="119.2" stroke="#4a2a1a" stroke-opacity="0.54" stroke-width="0.44"/><line x1="722.0" y1="118.5" x2="763.3" y2="180.4" stroke="#5a3422" stroke-opacity="0.16" stroke-width="0.54"/><line x1="637.8" y1="208.5" x2="657.2" y2="237.6" stroke="#3a1e12" stroke-opacity="0.50" stroke-width="1.20"/><line x1="693.8" y1="174.1" x2="729.4" y2="227.5" stroke="#3a1e12" stroke-opacity="0.51" stroke-width="1.36"/><line x1="642.0" y1="164.2" x2="657.7" y2="187.8" stroke="#3a1e12" stroke-opacity="0.15" stroke-width="0.87"/><line x1="633.4" y1="126.5" x2="656.1" y2="160.6" stroke="#c49a80" stroke-opacity="0.21" stroke-width="0.92"/><line x1="827.4" y1="92.7" x2="871.0" y2="158.2" stroke="#5a3422" stroke-opacity="0.46" stroke-width="0.62"/><line x1="826.3" y1="205.3" x2="840.0" y2="225.9" stroke="#3a1e12" stroke-opacity="0.35" stroke-width="1.03"/><line x1="671.7" y1="157.3" x2="716.7" y2="224.7" stroke="#5a3422" stroke-opacity="0.51" stroke-width="1.34"/><line x1="675.4" y1="247.8" x2="687.8" y2="266.5" stroke="#3a1e12" stroke-opacity="0.54" stroke-width="1.20"/><line x1="628.8" y1="207.2" x2="677.9" y2="280.8" stroke="#4a2a1a" stroke-opacity="0.59" stroke-width="0.94"/><line x1="661.0" y1="208.2" x2="670.0" y2="221.7" stroke="#4a2a1a" stroke-opacity="0.38" stroke-width="0.44"/><line x1="723.3" y1="201.5" x2="751.9" y2="244.4" stroke="#3a1e12" stroke-opacity="0.16" stroke-width="1.21"/><line x1="692.0" y1="82.7" x2="722.5" y2="128.5" stroke="#5a3422" stroke-opacity="0.46" stroke-width="1.32"/><line x1="618.0" y1="153.8" x2="656.4" y2="211.5" stroke="#5a3422" stroke-opacity="0.53" stroke-width="1.09"/><line x1="724.8" y1="180.4" x2="764.7" y2="240.1" stroke="#c49a80" stroke-opacity="0.16" stroke-width="0.96"/><line x1="738.0" y1="151.1" x2="781.4" y2="216.2" stroke="#5a3422" stroke-opacity="0.40" stroke-width="0.71"/><line x1="821.9" y1="214.0" x2="855.5" y2="264.5" stroke="#c49a80" stroke-opacity="0.13" stroke-width="0.54"/><line x1="722.7" y1="179.2" x2="739.4" y2="204.2" stroke="#c49a80" stroke-opacity="0.18" stroke-width="0.90"/><line x1="689.2" y1="178.5" x2="699.3" y2="193.7" stroke="#c49a80" stroke-opacity="0.25" stroke-width="0.94"/><line x1="622.9" y1="103.5" x2="638.1" y2="126.4" stroke="#5a3422" stroke-opacity="0.57" stroke-width="0.86"/><line x1="660.5" y1="165.5" x2="674.1" y2="185.9" stroke="#5a3422" stroke-opacity="0.35" stroke-width="1.22"/><line x1="718.4" y1="98.0" x2="744.1" y2="136.7" stroke="#3a1e12" stroke-opacity="0.16" stroke-width="0.66"/><line x1="604.5" y1="118.3" x2="613.3" y2="131.5" stroke="#3a1e12" stroke-opacity="0.28" stroke-width="1.12"/><line x1="735.6" y1="87.7" x2="774.3" y2="145.8" stroke="#4a2a1a" stroke-opacity="0.21" stroke-width="0.91"/><line x1="757.0" y1="178.6" x2="801.9" y2="245.9" stroke="#c49a80" stroke-opacity="0.07" stroke-width="1.03"/><line x1="731.8" y1="152.9" x2="776.1" y2="219.3" stroke="#3a1e12" stroke-opacity="0.39" stroke-width="0.62"/><line x1="790.8" y1="164.9" x2="834.8" y2="230.8" stroke="#4a2a1a" stroke-opacity="0.25" stroke-width="1.14"/><line x1="815.0" y1="134.5" x2="836.4" y2="166.6" stroke="#3a1e12" stroke-opacity="0.57" stroke-width="0.62"/><line x1="812.7" y1="107.7" x2="831.0" y2="135.1" stroke="#3a1e12" stroke-opacity="0.48" stroke-width="0.66"/><line x1="693.2" y1="227.4" x2="724.2" y2="273.8" stroke="#3a1e12" stroke-opacity="0.47" stroke-width="0.60"/><line x1="612.4" y1="173.8" x2="635.6" y2="208.6" stroke="#c49a80" stroke-opacity="0.23" stroke-width="0.76"/><line x1="733.7" y1="117.6" x2="783.6" y2="192.4" stroke="#5a3422" stroke-opacity="0.52" stroke-width="1.20"/><line x1="610.9" y1="82.5" x2="642.2" y2="129.4" stroke="#3a1e12" stroke-opacity="0.38" stroke-width="0.97"/><line x1="639.6" y1="106.8" x2="655.1" y2="130.0" stroke="#3a1e12" stroke-opacity="0.22" stroke-width="0.68"/><line x1="726.6" y1="94.0" x2="763.3" y2="149.0" stroke="#5a3422" stroke-opacity="0.18" stroke-width="0.50"/><line x1="703.6" y1="162.8" x2="729.8" y2="202.1" stroke="#3a1e12" stroke-opacity="0.42" stroke-width="0.41"/><line x1="797.5" y1="108.6" x2="824.7" y2="149.4" stroke="#3a1e12" stroke-opacity="0.48" stroke-width="0.81"/><line x1="730.6" y1="84.2" x2="771.9" y2="146.1" stroke="#5a3422" stroke-opacity="0.30" stroke-width="0.48"/><line x1="726.1" y1="106.1" x2="758.7" y2="155.0" stroke="#4a2a1a" stroke-opacity="0.30" stroke-width="1.16"/><line x1="807.5" y1="188.6" x2="848.2" y2="249.6" stroke="#4a2a1a" stroke-opacity="0.52" stroke-width="0.81"/><line x1="799.8" y1="181.0" x2="840.1" y2="241.3" stroke="#3a1e12" stroke-opacity="0.49" stroke-width="0.81"/><line x1="603.7" y1="133.8" x2="631.6" y2="175.5" stroke="#c49a80" stroke-opacity="0.07" stroke-width="0.76"/><line x1="588.2" y1="107.4" x2="636.6" y2="179.9" stroke="#5a3422" stroke-opacity="0.28" stroke-width="0.62"/><line x1="730.1" y1="166.9" x2="754.7" y2="203.7" stroke="#3a1e12" stroke-opacity="0.60" stroke-width="1.04"/><line x1="785.8" y1="249.9" x2="795.1" y2="263.8" stroke="#4a2a1a" stroke-opacity="0.43" stroke-width="1.14"/><line x1="690.9" y1="150.8" x2="730.9" y2="210.8" stroke="#4a2a1a" stroke-opacity="0.44" stroke-width="0.41"/><line x1="647.1" y1="221.5" x2="678.3" y2="268.3" stroke="#c49a80" stroke-opacity="0.17" stroke-width="1.37"/><line x1="798.2" y1="95.8" x2="825.0" y2="136.0" stroke="#3a1e12" stroke-opacity="0.44" stroke-width="0.95"/><line x1="684.4" y1="231.9" x2="708.8" y2="268.5" stroke="#c49a80" stroke-opacity="0.26" stroke-width="1.26"/><line x1="729.0" y1="73.6" x2="776.6" y2="145.1" stroke="#c49a80" stroke-opacity="0.15" stroke-width="0.93"/><line x1="663.9" y1="163.5" x2="692.3" y2="206.2" stroke="#4a2a1a" stroke-opacity="0.27" stroke-width="1.33"/><line x1="590.4" y1="199.1" x2="623.1" y2="248.1" stroke="#5a3422" stroke-opacity="0.43" stroke-width="0.81"/><line x1="600.8" y1="131.8" x2="625.6" y2="169.1" stroke="#4a2a1a" stroke-opacity="0.41" stroke-width="1.12"/><line x1="605.3" y1="225.2" x2="631.5" y2="264.5" stroke="#3a1e12" stroke-opacity="0.36" stroke-width="1.37"/><line x1="590.3" y1="84.2" x2="632.4" y2="147.3" stroke="#3a1e12" stroke-opacity="0.56" stroke-width="0.54"/><line x1="733.8" y1="92.7" x2="768.1" y2="144.1" stroke="#3a1e12" stroke-opacity="0.36" stroke-width="0.60"/><line x1="677.5" y1="107.2" x2="700.9" y2="142.3" stroke="#c49a80" stroke-opacity="0.10" stroke-width="0.82"/><line x1="652.6" y1="173.8" x2="678.4" y2="212.5" stroke="#3a1e12" stroke-opacity="0.50" stroke-width="0.93"/><line x1="829.0" y1="203.8" x2="847.3" y2="231.2" stroke="#c49a80" stroke-opacity="0.09" stroke-width="1.29"/><line x1="746.4" y1="142.8" x2="766.1" y2="172.2" stroke="#c49a80" stroke-opacity="0.21" stroke-width="0.96"/><line x1="638.4" y1="130.9" x2="656.6" y2="158.3" stroke="#3a1e12" stroke-opacity="0.58" stroke-width="0.90"/><line x1="814.3" y1="98.2" x2="825.1" y2="114.5" stroke="#c49a80" stroke-opacity="0.12" stroke-width="0.83"/><line x1="599.6" y1="120.7" x2="619.5" y2="150.5" stroke="#3a1e12" stroke-opacity="0.49" stroke-width="1.31"/><line x1="725.7" y1="183.1" x2="749.6" y2="218.9" stroke="#4a2a1a" stroke-opacity="0.37" stroke-width="0.61"/><line x1="701.4" y1="88.0" x2="745.9" y2="154.7" stroke="#c49a80" stroke-opacity="0.23" stroke-width="0.85"/><line x1="796.1" y1="202.9" x2="822.9" y2="243.1" stroke="#3a1e12" stroke-opacity="0.49" stroke-width="0.79"/><line x1="667.5" y1="167.5" x2="717.0" y2="241.7" stroke="#3a1e12" stroke-opacity="0.30" stroke-width="0.95"/><line x1="700.7" y1="149.8" x2="713.1" y2="168.3" stroke="#3a1e12" stroke-opacity="0.54" stroke-width="0.48"/><line x1="686.9" y1="159.2" x2="729.1" y2="222.6" stroke="#3a1e12" stroke-opacity="0.36" stroke-width="1.22"/><line x1="601.1" y1="107.2" x2="637.0" y2="161.0" stroke="#4a2a1a" stroke-opacity="0.19" stroke-width="0.70"/><line x1="659.1" y1="105.5" x2="682.3" y2="140.3" stroke="#3a1e12" stroke-opacity="0.48" stroke-width="0.77"/><line x1="664.1" y1="145.8" x2="697.1" y2="195.4" stroke="#4a2a1a" stroke-opacity="0.56" stroke-width="1.09"/><line x1="699.0" y1="212.7" x2="720.0" y2="244.2" stroke="#c49a80" stroke-opacity="0.13" stroke-width="0.80"/><line x1="650.3" y1="140.2" x2="673.8" y2="175.5" stroke="#5a3422" stroke-opacity="0.31" stroke-width="0.80"/><line x1="787.2" y1="200.5" x2="810.9" y2="235.9" stroke="#c49a80" stroke-opacity="0.15" stroke-width="0.55"/><line x1="720.7" y1="98.3" x2="760.6" y2="158.2" stroke="#3a1e12" stroke-opacity="0.55" stroke-width="0.68"/><line x1="647.8" y1="98.0" x2="662.8" y2="120.4" stroke="#5a3422" stroke-opacity="0.28" stroke-width="0.42"/><line x1="595.5" y1="156.7" x2="636.6" y2="218.3" stroke="#3a1e12" stroke-opacity="0.19" stroke-width="0.48"/><line x1="807.4" y1="87.5" x2="842.1" y2="139.6" stroke="#5a3422" stroke-opacity="0.21" stroke-width="1.15"/><line x1="641.3" y1="105.2" x2="681.4" y2="165.4" stroke="#5a3422" stroke-opacity="0.38" stroke-width="1.16"/><line x1="676.5" y1="212.5" x2="698.7" y2="245.8" stroke="#3a1e12" stroke-opacity="0.21" stroke-width="0.89"/><line x1="764.3" y1="227.3" x2="789.7" y2="265.4" stroke="#3a1e12" stroke-opacity="0.52" stroke-width="1.07"/><line x1="778.8" y1="199.4" x2="824.1" y2="267.4" stroke="#c49a80" stroke-opacity="0.26" stroke-width="1.04"/><line x1="684.1" y1="92.0" x2="697.0" y2="111.3" stroke="#3a1e12" stroke-opacity="0.57" stroke-width="1.32"/><line x1="773.3" y1="240.6" x2="797.3" y2="276.5" stroke="#5a3422" stroke-opacity="0.23" stroke-width="0.60"/><line x1="709.7" y1="110.0" x2="754.9" y2="177.7" stroke="#4a2a1a" stroke-opacity="0.36" stroke-width="1.13"/><line x1="754.1" y1="212.3" x2="769.9" y2="236.0" stroke="#c49a80" stroke-opacity="0.08" stroke-width="0.86"/><line x1="709.6" y1="212.1" x2="730.9" y2="244.1" stroke="#c49a80" stroke-opacity="0.11" stroke-width="0.76"/><line x1="642.3" y1="190.0" x2="675.4" y2="239.6" stroke="#4a2a1a" stroke-opacity="0.25" stroke-width="0.58"/><line x1="677.0" y1="210.2" x2="724.3" y2="281.2" stroke="#c49a80" stroke-opacity="0.19" stroke-width="1.34"/><line x1="697.3" y1="107.7" x2="742.5" y2="175.6" stroke="#c49a80" stroke-opacity="0.25" stroke-width="0.74"/><line x1="770.8" y1="81.6" x2="815.0" y2="147.9" stroke="#3a1e12" stroke-opacity="0.33" stroke-width="0.62"/><line x1="785.2" y1="138.9" x2="815.5" y2="184.3" stroke="#3a1e12" stroke-opacity="0.38" stroke-width="0.67"/><line x1="760.0" y1="131.4" x2="768.8" y2="144.6" stroke="#3a1e12" stroke-opacity="0.36" stroke-width="0.77"/><line x1="770.9" y1="185.8" x2="785.8" y2="208.1" stroke="#4a2a1a" stroke-opacity="0.22" stroke-width="0.72"/><line x1="820.1" y1="219.3" x2="833.9" y2="239.9" stroke="#c49a80" stroke-opacity="0.22" stroke-width="1.02"/><line x1="713.5" y1="93.8" x2="753.8" y2="154.4" stroke="#3a1e12" stroke-opacity="0.15" stroke-width="1.22"/><line x1="795.7" y1="98.5" x2="815.3" y2="127.9" stroke="#5a3422" stroke-opacity="0.47" stroke-width="0.50"/><line x1="753.7" y1="83.7" x2="793.2" y2="142.9" stroke="#3a1e12" stroke-opacity="0.39" stroke-width="0.91"/><line x1="774.1" y1="131.9" x2="820.6" y2="201.6" stroke="#3a1e12" stroke-opacity="0.19" stroke-width="1.23"/><line x1="594.9" y1="144.4" x2="623.7" y2="187.8" stroke="#4a2a1a" stroke-opacity="0.58" stroke-width="1.36"/><line x1="667.2" y1="96.4" x2="688.2" y2="127.9" stroke="#4a2a1a" stroke-opacity="0.36" stroke-width="1.12"/><line x1="600.5" y1="95.4" x2="636.6" y2="149.6" stroke="#3a1e12" stroke-opacity="0.45" stroke-width="1.15"/><line x1="751.5" y1="84.0" x2="775.5" y2="120.0" stroke="#c49a80" stroke-opacity="0.21" stroke-width="0.64"/><line x1="606.4" y1="190.5" x2="650.3" y2="256.4" stroke="#c49a80" stroke-opacity="0.24" stroke-width="1.12"/><line x1="614.4" y1="165.0" x2="661.7" y2="235.9" stroke="#5a3422" stroke-opacity="0.49" stroke-width="1.35"/><line x1="730.8" y1="101.8" x2="747.0" y2="126.0" stroke="#4a2a1a" stroke-opacity="0.32" stroke-width="0.51"/><line x1="817.0" y1="161.2" x2="855.5" y2="218.9" stroke="#3a1e12" stroke-opacity="0.30" stroke-width="1.23"/><ellipse cx="700" cy="175" rx="55" ry="30" fill="#b48670" opacity="0.22" filter="url(#blur3)"/></g>
<path d="M714.0,254.0 C715.2,250.3 718.2,238.4 721.0,232.0 C723.8,225.6 725.4,222.8 731.0,215.6 C736.6,208.4 745.3,196.0 754.4,189.0 C763.5,182.0 774.0,176.5 785.7,173.4 C797.4,170.3 813.5,169.8 824.8,170.3 C836.0,170.8 845.9,173.2 852.9,176.6 C859.9,180.0 863.4,185.7 867.0,190.6 C870.6,195.5 872.2,195.4 874.8,206.0 C877.2,216.6 880.8,246.0 882.0,254.0 L1000,262 L700,262 Z" fill="url(#rC)"/>
<path d="M733.0,254.0 C734.5,250.0 737.5,237.7 742.0,230.0 C746.5,222.3 752.0,214.3 760.0,208.0 C768.0,201.7 778.7,195.7 790.0,192.0 C801.3,188.3 817.0,186.0 828.0,186.0 C839.0,186.0 849.0,188.3 856.0,192.0 C863.0,195.7 865.7,197.7 870.0,208.0 C874.3,218.3 880.0,246.3 882.0,254.0 L1000,262 L720,262 Z" fill="url(#rCd)" filter="url(#blur05)"/>
<path d="M758,222 C785,202 825,193 856,200" fill="none" stroke="#8c7870" stroke-width="9" stroke-opacity="0.45" filter="url(#blur3)"/><path d="M768,218 C795,203 825,197 850,200" fill="none" stroke="#b8a49c" stroke-width="2" stroke-opacity="0.35" filter="url(#blur1)"/>
<path d="M766.0,254.0 C769.2,251.0 777.8,241.3 785.0,236.0 C792.2,230.7 797.2,225.9 809.0,222.0 C820.8,218.1 843.0,213.6 856.0,212.5 C869.0,211.4 877.9,213.0 887.0,215.6 C896.1,218.2 904.9,222.1 910.7,228.0 C916.5,233.9 919.6,245.3 921.6,251.0 C923.6,256.7 922.8,260.2 923.0,262.0 L1000,262 L740,262 Z" fill="url(#rD)"/>
<path d="M795.0,254.0 C800.8,251.7 817.5,243.3 830.0,240.0 C842.5,236.7 857.5,233.8 870.0,234.0 C882.5,234.2 897.0,237.7 905.0,241.0 C913.0,244.3 915.8,251.8 918.0,254.0 L1000,262 L780,262 Z" fill="#35201a" filter="url(#blur05)"/>
</g>
</svg>
<div class="t" style="left:259px;top:103.62px;font-size:21.6px;color:#fff;text-shadow:0 1px 2px rgba(0,0,0,.45);">Processo: 3214</div>
<div class="t" style="left:259px;top:129.71px;font-size:14.4px;color:#fff;text-shadow:0 1px 2px rgba(0,0,0,.45);">Autor: autor</div>
<div class="t" style="left:259px;top:147.71px;font-size:14.4px;color:#fff;text-shadow:0 1px 2px rgba(0,0,0,.45);">Réu: reu</div>
<div class="t" style="left:230.2px;width:100px;text-align:center;top:180.39px;font-size:16.2px;color:#fff;text-shadow:0 1px 2px rgba(0,0,0,.45);">1</div>
<div class="t" style="left:230.2px;width:100px;text-align:center;top:200.76px;font-size:12.8px;color:#fff;text-shadow:0 1px 2px rgba(0,0,0,.45);">Alvarás</div>
<div class="t" style="left:325.2px;width:100px;text-align:center;top:180.39px;font-size:16.2px;color:#fff;text-shadow:0 1px 2px rgba(0,0,0,.45);">2</div>
<div class="t" style="left:325.2px;width:100px;text-align:center;top:200.76px;font-size:12.8px;color:#fff;text-shadow:0 1px 2px rgba(0,0,0,.45);">Audiências</div>
<div class="t" style="left:423px;width:100px;text-align:center;top:180.39px;font-size:16.2px;color:#fff;text-shadow:0 1px 2px rgba(0,0,0,.45);">0</div>
<div class="t" style="left:423px;width:100px;text-align:center;top:200.76px;font-size:12.8px;color:#fff;text-shadow:0 1px 2px rgba(0,0,0,.45);">Cálculos</div>
<div class="t" style="left:511px;width:100px;text-align:center;top:180.39px;font-size:16.2px;color:#fff;text-shadow:0 1px 2px rgba(0,0,0,.45);">0</div>
<div class="t" style="left:511px;width:100px;text-align:center;top:200.76px;font-size:12.8px;color:#fff;text-shadow:0 1px 2px rgba(0,0,0,.45);">Tarefas</div>
<div class="abs fab"></div>
<svg class="abs" style="left:876.5px;top:238.5px;width:22.5px;height:22.5px" viewBox="0 0 24 24"><path fill="#fff" d="M3 17.25V21h3.75L17.81 9.94l-3.75-3.75L3 17.25zM20.71 7.04c.39-.39.39-1.02 0-1.41l-2.34-2.34c-.39-.39-1.02-.39-1.41 0l-1.83 1.83 3.75 3.75 1.83-1.83z"/></svg>
<div class="t" style="left:263.2px;top:278.86px;font-size:10.8px;color:#444">INFORMAÇÕES GERAIS</div>
<div class="t" style="left:401.1px;top:278.86px;font-size:10.8px;color:#444">ALVARÁS</div>
<div class="t" style="left:464.1px;top:278.86px;font-size:10.8px;color:#444">ARQUIVOS</div>
<div class="t" style="left:535.3px;top:278.86px;font-size:10.8px;color:#444">AUDIÊNCIAS</div>
<div class="t" style="left:615.7px;top:278.86px;font-size:10.8px;color:#444">CÁLCULOS</div>
<div class="t" style="left:688.8px;top:278.86px;font-size:10.8px;color:#444">TAREFAS</div>
<div class="t" style="left:751px;top:278.86px;font-size:10.8px;color:#444">HISTÓRICO</div>
<div class="abs" style="left:256px;top:300px;width:657px;height:1px;background:#e2e2e2"></div>
<div class="abs" style="left:256px;top:299px;width:138px;height:2px;background:#04303f"></div>
<div class="t" style="left:255.8px;top:316.81px;font-size:14.4px;color:#1e5064">Informações do Processo</div>
<div class="t" style="left:600px;top:316.81px;font-size:14.4px;color:#1e5064">Informações do Autor</div>
<div class="t" style="left:600px;top:601.01px;font-size:14.4px;color:#1e5064">Informações do Réu</div>
<svg class="abs" style="left:255px;top:352px;width:25.2px;height:25.2px" viewBox="0 0 24 24"><path fill="#e53935" d="M17.81 4.47c-.08 0-.16-.02-.23-.06C15.66 3.42 14 3 12.01 3c-1.98 0-3.86.47-5.57 1.41-.24.13-.54.04-.68-.2-.13-.24-.04-.55.2-.68C7.82 2.52 9.86 2 12.01 2c2.13 0 3.98.47 6.010 1.52.25.13.34.43.21.67-.09.18-.26.28-.42.28zM3.5 9.72c-.1 0-.2-.03-.29-.09-.23-.16-.28-.47-.12-.7.99-1.4 2.25-2.5 3.75-3.27C9.98 4.04 14 4.03 17.15 5.65c1.5.77 2.76 1.86 3.75 3.25.16.22.11.54-.12.7-.23.16-.54.11-.7-.12-.9-1.26-2.04-2.25-3.39-2.94-2.87-1.47-6.54-1.47-9.4.01-1.36.7-2.5 1.7-3.4 2.96-.08.14-.23.21-.39.21zm6.25 12.07c-.13 0-.26-.05-.35-.15-.87-.87-1.34-1.43-2.01-2.64-.69-1.23-1.05-2.73-1.05-4.34 0-2.97 2.54-5.39 5.66-5.39s5.66 2.42 5.66 5.39c0 .28-.22.5-.5.5s-.5-.22-.5-.5c0-2.42-2.09-4.39-4.66-4.39-2.57 0-4.66 1.97-4.66 4.39 0 1.44.32 2.77.93 3.85.64 1.15 1.08 1.64 1.85 2.42.19.2.19.51 0 .71-.11.1-.24.15-.37.15zm7.17-1.85c-1.19 0-2.24-.3-3.1-.89-1.49-1.01-2.38-2.65-2.38-4.39 0-.28.22-.5.5-.5s.5.22.5.5c0 1.41.72 2.74 1.94 3.56.71.48 1.54.71 2.54.71.24 0 .64-.03 1.04-.1.27-.05.53.13.58.41.05.27-.13.53-.41.58-.57.11-1.07.12-1.21.12zM14.91 22c-.04 0-.09-.01-.13-.02-1.59-.44-2.63-1.03-3.72-2.1-1.4-1.39-2.17-3.24-2.17-5.22 0-1.62 1.38-2.94 3.08-2.94 1.7 0 3.08 1.32 3.08 2.94 0 1.07.93 1.94 2.08 1.94s2.08-.87 2.08-1.94c0-3.77-3.25-6.83-7.25-6.83-2.84 0-5.44 1.58-6.61 4.03-.39.81-.59 1.76-.59 2.8 0 .78.07 2.01.67 3.61.1.26-.03.55-.29.64-.26.1-.55-.04-.64-.29-.49-1.31-.73-2.61-.73-3.96 0-1.2.23-2.29.68-3.24 1.33-2.79 4.28-4.6 7.51-4.6 4.55 0 8.25 3.51 8.25 7.83 0 1.62-1.38 2.94-3.08 2.94s-3.08-1.32-3.08-2.94c0-1.07-.93-1.94-2.08-1.94s-2.08.87-2.08 1.94c0 1.71.66 3.31 1.87 4.51.95.94 1.86 1.46 3.27 1.85.27.07.42.35.35.61-.05.23-.26.38-.47.38z"/></svg>
<div class="t" style="left:300px;top:348.86px;font-size:10.8px;color:#757575">Número do Processo</div>
<div class="t" style="left:300px;top:364.38px;font-size:13.85px;color:#424242">3214</div>
<div class="abs" style="left:296px;top:388.0px;width:272px;height:1px;background:#e0e0e0"></div>
<svg class="abs" style="left:255px;top:400.5px;width:25.2px;height:25.2px" viewBox="0 0 24 24"><path fill="#e53935" d="M17 12h-5v5h5v-5zM16 1v2H8V1H6v2H5c-1.11 0-1.99.9-1.99 2L3 19c0 1.1.89 2 2 2h14c1.1 0 2-.9 2-2V5c0-1.1-.9-2-2-2h-1V1h-2zm3 18H5V8h14v11z"/></svg>
<div class="t" style="left:300px;top:398.86px;font-size:10.8px;color:#757575">Data Petição Inicial</div>
<div class="t" style="left:300px;top:414.38px;font-size:13.85px;color:#424242">29-06-2018</div>
<div class="abs" style="left:296px;top:438.0px;width:272px;height:1px;background:#e0e0e0"></div>
<svg class="abs" style="left:255px;top:450.0px;width:25.2px;height:25.2px" viewBox="0 0 24 24"><path fill="#e53935" d="M4 6h18V4H4c-1.1 0-2 .9-2 2v11H0v3h14v-3H4V6zm19 2h-6c-.55 0-1 .45-1 1v10c0 .55.45 1 1 1h6c.55 0 1-.45 1-1V9c0-.55-.45-1-1-1zm-1 9h-4v-7h4v7z"/></svg>
<div class="t" style="left:300px;top:448.36px;font-size:10.8px;color:#757575">Processo Eletrônico</div>
<div class="t" style="left:300px;top:463.88px;font-size:13.85px;color:#424242">Sim</div>
<div class="abs" style="left:296px;top:487.5px;width:272px;height:1px;background:#e0e0e0"></div>
<svg class="abs" style="left:255px;top:498.5px;width:25.2px;height:25.2px" viewBox="0 0 24 24"><path fill="#e53935" d="M21 18v1c0 1.1-.9 2-2 2H5c-1.11 0-2-.9-2-2V5c0-1.1.89-2 2-2h14c1.1 0 2 .9 2 2v1h-9c-1.11 0-2 .9-2 2v8c0 1.1.89 2 2 2h9zm-9-2h10V8H12v8zm4-2.5c-.83 0-1.5-.67-1.5-1.5s.67-1.5 1.5-1.5 1.5.67 1.5 1.5-.67 1.5-1.5 1.5z"/></svg>
<div class="t" style="left:300px;top:497.86px;font-size:10.8px;color:#757575">Petição Inicial</div>
<div class="t" style="left:300px;top:513.38px;font-size:13.85px;color:#424242">peti</div>
<div class="abs" style="left:296px;top:537.0px;width:272px;height:1px;background:#e0e0e0"></div>
<svg class="abs" style="left:255px;top:548.5px;width:25.2px;height:25.2px" viewBox="0 0 24 24"><path fill="#e53935" d="M12 2C8.13 2 5 5.13 5 9c0 5.25 7 13 7 13s7-7.75 7-13c0-3.87-3.13-7-7-7zm0 9.5c-1.38 0-2.5-1.12-2.5-2.5s1.12-2.5 2.5-2.5 2.5 1.12 2.5 2.5-1.12 2.5-2.5 2.5z"/></svg>
<div class="t" style="left:300px;top:546.86px;font-size:10.8px;color:#757575">Vara Judicial</div>
<div class="t" style="left:300px;top:562.38px;font-size:13.85px;color:#424242">01ª Vara do Trabalho de Vitória-ES -</div>
<div class="t" style="left:300px;top:581.28px;font-size:13.85px;color:#424242">Vitória - ES</div>
<div class="abs" style="left:296px;top:604.5px;width:272px;height:1px;background:#e0e0e0"></div>
<svg class="abs" style="left:255px;top:616.5px;width:25.2px;height:25.2px" viewBox="0 0 24 24"><path fill="#e53935" d="M9 11.75c-.69 0-1.25.56-1.25 1.25s.56 1.25 1.25 1.25 1.25-.56 1.25-1.25-.56-1.25-1.25-1.25zm6 0c-.69 0-1.25.56-1.25 1.25s.56 1.25 1.25 1.25 1.25-.56 1.25-1.25-.56-1.25-1.25-1.25zM12 2C6.48 2 2 6.48 2 12s4.48 10 10 10 10-4.48 10-10S17.52 2 12 2zm0 18c-4.41 0-8-3.59-8-8 0-.29.02-.58.05-.86 2.36-1.05 4.23-2.98 5.21-5.37C11.07 8.33 14.05 10 17.42 10c.78 0 1.53-.09 2.25-.26.21.71.33 1.47.33 2.26 0 4.410-3.59 8-8 8z"/></svg>
<div class="t" style="left:300px;top:614.86px;font-size:10.8px;color:#757575">Responsável do Processo</div>
<div class="t" style="left:300px;top:630.38px;font-size:13.85px;color:#424242">Administrador</div>
<div class="abs" style="left:296px;top:654.0px;width:272px;height:1px;background:#e0e0e0"></div>
<svg class="abs" style="left:255px;top:665.5px;width:25.2px;height:25.2px" viewBox="0 0 24 24"><path fill="#e53935" d="M17 12h-5v5h5v-5zM16 1v2H8V1H6v2H5c-1.11 0-1.99.9-1.99 2L3 19c0 1.1.89 2 2 2h14c1.1 0 2-.9 2-2V5c0-1.1-.9-2-2-2h-1V1h-2zm3 18H5V8h14v11z"/></svg>
<div class="t" style="left:300px;top:663.86px;font-size:10.8px;color:#757575">Aceito em:</div>
<div class="t" style="left:300px;top:679.38px;font-size:13.85px;color:#424242">-</div>
<div class="abs" style="left:296px;top:703.0px;width:272px;height:1px;background:#e0e0e0"></div>
<svg class="abs" style="left:255px;top:714.5px;width:25.2px;height:25.2px" viewBox="0 0 24 24"><path fill="#e53935" d="M1 21h4V9H1v12zm22-11c0-1.1-.9-2-2-2h-6.31l.95-4.57.03-.32c0-.41-.17-.79-.44-1.06L14.17 1 7.59 7.59C7.22 7.95 7 8.45 7 9v10c0 1.1.9 2 2 2h9c.83 0 1.54-.5 1.84-1.22l3.020-7.05c.09-.23.14-.47.14-.73v-1.91l-.01-.01L23 10z"/></svg>
<div class="t" style="left:300px;top:712.86px;font-size:10.8px;color:#757575">Arquivado em:</div>
<div class="t" style="left:300px;top:728.38px;font-size:13.85px;color:#424242">-</div>
<div class="abs" style="left:296px;top:752.0px;width:272px;height:1px;background:#e0e0e0"></div>
<svg class="abs" style="left:255px;top:763.5px;width:25.2px;height:25.2px" viewBox="0 0 24 24"><path fill="#e53935" d="M17 12h-5v5h5v-5zM16 1v2H8V1H6v2H5c-1.11 0-1.99.9-1.99 2L3 19c0 1.1.89 2 2 2h14c1.1 0 2-.9 2-2V5c0-1.1-.9-2-2-2h-1V1h-2zm3 18H5V8h14v11z"/></svg>
<div class="t" style="left:300px;top:761.86px;font-size:10.8px;color:#757575">Registrado em:</div>
<div class="t" style="left:300px;top:777.38px;font-size:13.85px;color:#424242">25-06-2018 22:53</div>
<svg class="abs" style="left:598.7px;top:352px;width:25.2px;height:25.2px" viewBox="0 0 24 24"><path fill="#e53935" d="M12 12c2.21 0 4-1.79 4-4s-1.79-4-4-4-4 1.79-4 4 1.79 4 4 4zm0 2c-2.67 0-8 1.34-8 4v2h16v-2c0-2.66-5.33-4-8-4z"/></svg>
<div class="t" style="left:644px;top:348.86px;font-size:10.8px;color:#757575">Nome do Autor</div>
<div class="t" style="left:644px;top:364.38px;font-size:13.85px;color:#424242">autor</div>
<div class="abs" style="left:640px;top:388.0px;width:273px;height:1px;background:#e0e0e0"></div>
<svg class="abs" style="left:598.7px;top:400.5px;width:25.2px;height:25.2px" viewBox="0 0 24 24"><path fill="#e53935" d="M12 1L3 5v6c0 5.55 3.84 10.74 9 12 5.16-1.26 9-6.45 9-12V5l-9-4zm-2 16l-4-4 1.41-1.41L10 14.17l6.59-6.59L18 9l-8 8z"/></svg>
<div class="t" style="left:644px;top:398.86px;font-size:10.8px;color:#757575">Documento do Autor</div>
<div class="t" style="left:644px;top:414.38px;font-size:13.85px;color:#424242">cpf autor</div>
<div class="abs" style="left:640px;top:438.0px;width:273px;height:1px;background:#e0e0e0"></div>
<svg class="abs" style="left:598.7px;top:450.0px;width:25.2px;height:25.2px" viewBox="0 0 24 24"><path fill="#e53935" d="M6.62 10.79c1.44 2.83 3.76 5.14 6.59 6.59l2.2-2.2c.27-.27.67-.36 1.02-.24 1.12.37 2.33.57 3.57.57.55 0 1 .45 1 1V20c0 .55-.45 1-1 1-9.39 0-17-7.61-17-17 0-.55.45-1 1-1h3.5c.55 0 1 .45 1 1 0 1.25.2 2.45.57 3.57.11.35.03.74-.25 1.02l-2.2 2.2z"/></svg>
<div class="t" style="left:644px;top:448.36px;font-size:10.8px;color:#757575">Telefone do Autor</div>
<div class="t" style="left:644px;top:463.88px;font-size:13.85px;color:#424242">(11) 1111-1111</div>
<div class="abs" style="left:640px;top:487.5px;width:273px;height:1px;background:#e0e0e0"></div>
<svg class="abs" style="left:598.7px;top:498.5px;width:25.2px;height:25.2px" viewBox="0 0 24 24"><path fill="#e53935" d="M17 1.01L7 1c-1.1 0-2 .9-2 2v18c0 1.1.9 2 2 2h10c1.1 0 2-.9 2-2V3c0-1.1-.9-1.99-2-1.99zM17 19H7V5h10v14z"/></svg>
<div class="t" style="left:644px;top:497.86px;font-size:10.8px;color:#757575">Celular do Autor</div>
<div class="t" style="left:644px;top:513.38px;font-size:13.85px;color:#424242">(22) 22222-2222</div>
<div class="abs" style="left:640px;top:537.0px;width:273px;height:1px;background:#e0e0e0"></div>
<svg class="abs" style="left:598.7px;top:548.5px;width:25.2px;height:25.2px" viewBox="0 0 24 24"><path fill="#e53935" d="M20 4H4c-1.1 0-1.99.9-1.99 2L2 18c0 1.1.9 2 2 2h16c1.1 0 2-.9 2-2V6c0-1.1-.9-2-2-2zm0 4l-8 5-8-5V6l8 5 8-5v2z"/></svg>
<div class="t" style="left:644px;top:546.86px;font-size:10.8px;color:#757575">E-mail do Autor</div>
<div class="t" style="left:644px;top:562.38px;font-size:13.85px;color:#424242">emailx@email.com</div>
<svg class="abs" style="left:598.7px;top:634.7px;width:25.2px;height:25.2px" viewBox="0 0 24 24"><path fill="#e53935" d="M12 12c2.21 0 4-1.79 4-4s-1.79-4-4-4-4 1.79-4 4 1.79 4 4 4zm0 2c-2.67 0-8 1.34-8 4v2h16v-2c0-2.66-5.33-4-8-4z"/></svg>
<div class="t" style="left:644px;top:632.06px;font-size:10.8px;color:#757575">Nome do Réu</div>
<div class="t" style="left:644px;top:647.58px;font-size:13.85px;color:#424242">reu</div>
<div class="abs" style="left:640px;top:672.2px;width:273px;height:1px;background:#e0e0e0"></div>
<svg class="abs" style="left:598.7px;top:684.5px;width:25.2px;height:25.2px" viewBox="0 0 24 24"><path fill="#e53935" d="M12 1L3 5v6c0 5.55 3.84 10.74 9 12 5.16-1.26 9-6.45 9-12V5l-9-4zm-2 16l-4-4 1.41-1.41L10 14.17l6.59-6.59L18 9l-8 8z"/></svg>
<div class="t" style="left:644px;top:681.86px;font-size:10.8px;color:#757575">Documento do Réu</div>
<div class="t" style="left:644px;top:697.38px;font-size:13.85px;color:#424242">cpf reu</div>
<div class="abs" style="left:640px;top:722.0px;width:273px;height:1px;background:#e0e0e0"></div>
<svg class="abs" style="left:598.7px;top:733.5px;width:25.2px;height:25.2px" viewBox="0 0 24 24"><path fill="#e53935" d="M6.62 10.79c1.44 2.83 3.76 5.14 6.59 6.59l2.2-2.2c.27-.27.67-.36 1.02-.24 1.12.37 2.33.57 3.57.57.55 0 1 .45 1 1V20c0 .55-.45 1-1 1-9.39 0-17-7.61-17-17 0-.55.45-1 1-1h3.5c.55 0 1 .45 1 1 0 1.25.2 2.45.57 3.57.11.35.03.74-.25 1.02l-2.2 2.2z"/></svg>
<div class="t" style="left:644px;top:730.86px;font-size:10.8px;color:#757575">Telefone do Réu</div>
<div class="t" style="left:644px;top:746.38px;font-size:13.85px;color:#424242">(33) 3333-3333</div>
<div class="abs" style="left:640px;top:771.0px;width:273px;height:1px;background:#e0e0e0"></div>
<svg class="abs" style="left:598.7px;top:782.5px;width:25.2px;height:25.2px" viewBox="0 0 24 24"><path fill="#e53935" d="M17 1.01L7 1c-1.1 0-2 .9-2 2v18c0 1.1.9 2 2 2h10c1.1 0 2-.9 2-2V3c0-1.1-.9-1.99-2-1.99zM17 19H7V5h10v14z"/></svg>
<div class="t" style="left:644px;top:779.86px;font-size:10.8px;color:#757575">Celular do Réu</div>
<div class="t" style="left:644px;top:795.38px;font-size:13.85px;color:#424242">(44) 44444-4444</div>
<div class="abs" style="left:640px;top:820.0px;width:273px;height:1px;background:#e0e0e0"></div>
<div id="rpanel" class="abs"></div>
<div class="t" style="left:977px;top:81.31px;font-size:14.4px;color:#555">Próximos Tarefas</div>
<div class="t" style="left:977px;top:116.36px;font-size:10.8px;color:#555">Nenhuma tarefa aceito sujeito à vencimento.</div>
<div class="t" style="left:977px;top:161.31px;font-size:14.4px;color:#555">Próximas Audiências</div>
<div class="t" style="left:977px;top:196.36px;font-size:10.8px;color:#555">Nenhuma audiência aceita sujeita à vencimento.</div>
</body></html>
